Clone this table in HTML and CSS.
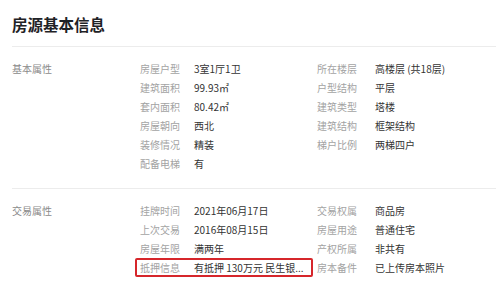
FILE: index.html
```html
<!DOCTYPE html>
<html lang="zh">
<head>
<meta charset="utf-8">
<link rel="stylesheet" href="styles.css">
</head>
<body>
<div class="panel">
  <h1 class="title">房源基本信息</h1>
  <section class="section basic">
    <div class="sec-label">基本属性</div>
    <div class="grid">
      <div class="pair"><span class="k">房屋户型</span><span class="v">3室1厅1卫</span></div>
      <div class="pair"><span class="k">所在楼层</span><span class="v">高楼层 (共18层)</span></div>
      <div class="pair"><span class="k">建筑面积</span><span class="v">99.93㎡</span></div>
      <div class="pair"><span class="k">户型结构</span><span class="v">平层</span></div>
      <div class="pair"><span class="k">套内面积</span><span class="v">80.42㎡</span></div>
      <div class="pair"><span class="k">建筑类型</span><span class="v">塔楼</span></div>
      <div class="pair"><span class="k">房屋朝向</span><span class="v">西北</span></div>
      <div class="pair"><span class="k">建筑结构</span><span class="v">框架结构</span></div>
      <div class="pair"><span class="k">装修情况</span><span class="v">精装</span></div>
      <div class="pair"><span class="k">梯户比例</span><span class="v">两梯四户</span></div>
      <div class="pair"><span class="k">配备电梯</span><span class="v">有</span></div>
    </div>
  </section>
  <section class="section trade">
    <div class="sec-label">交易属性</div>
    <div class="grid">
      <div class="pair"><span class="k">挂牌时间</span><span class="v">2021年06月17日</span></div>
      <div class="pair"><span class="k">交易权属</span><span class="v">商品房</span></div>
      <div class="pair"><span class="k">上次交易</span><span class="v">2016年08月15日</span></div>
      <div class="pair"><span class="k">房屋用途</span><span class="v">普通住宅</span></div>
      <div class="pair"><span class="k">房屋年限</span><span class="v">满两年</span></div>
      <div class="pair"><span class="k">产权所属</span><span class="v">非共有</span></div>
      <div class="pair marked"><span class="k">抵押信息</span><span class="v">有抵押 130万元 民生银...</span></div>
      <div class="pair"><span class="k">房本备件</span><span class="v">已上传房本照片</span></div>
    </div>
  </section>
</div>
</body>
</html>
```

FILE: styles.css
```css
html, body {
  margin: 0;
  padding: 0;
  background: #fff;
}
body {
  font-family: "Noto Sans CJK SC", "Noto Sans", sans-serif;
  width: 499px;
  height: 284px;
  overflow: hidden;
}
.panel {
  padding: 0 3px 0 12px;
}
.title {
  margin: 0;
  height: 47px;
  box-sizing: border-box;
  padding-top: 11px;
  font-size: 15.5px;
  line-height: 26px;
  font-weight: 700;
  color: #1f2226;
  border-bottom: 1px solid #ececec;
}
.section {
  display: flex;
  border-bottom: 1px solid #ececec;
}
.basic {
  padding: 12px 0 15px;
}
.trade {
  padding: 12px 0 0;
  border-bottom: none;
}
.sec-label {
  width: 128px;
  flex: none;
  font-size: 10px;
  line-height: 19px;
  color: #8a8a8a;
}
.grid {
  display: grid;
  grid-template-columns: 177px 1fr;
  grid-auto-rows: 19px;
}
.pair {
  display: flex;
  align-items: center;
  font-size: 10px;
  line-height: 19px;
  white-space: nowrap;
}
.k {
  width: 54px;
  flex: none;
  color: #a3a3a3;
}
.v {
  color: #333;
}
.pair:nth-child(2n) .k {
  width: 58px;
}
.marked {
  position: relative;
}
.marked::after {
  content: "";
  position: absolute;
  left: -5px;
  right: 4px;
  top: 0;
  bottom: 0;
  border: 2px solid #d6262b;
  border-radius: 2px;
}
```
